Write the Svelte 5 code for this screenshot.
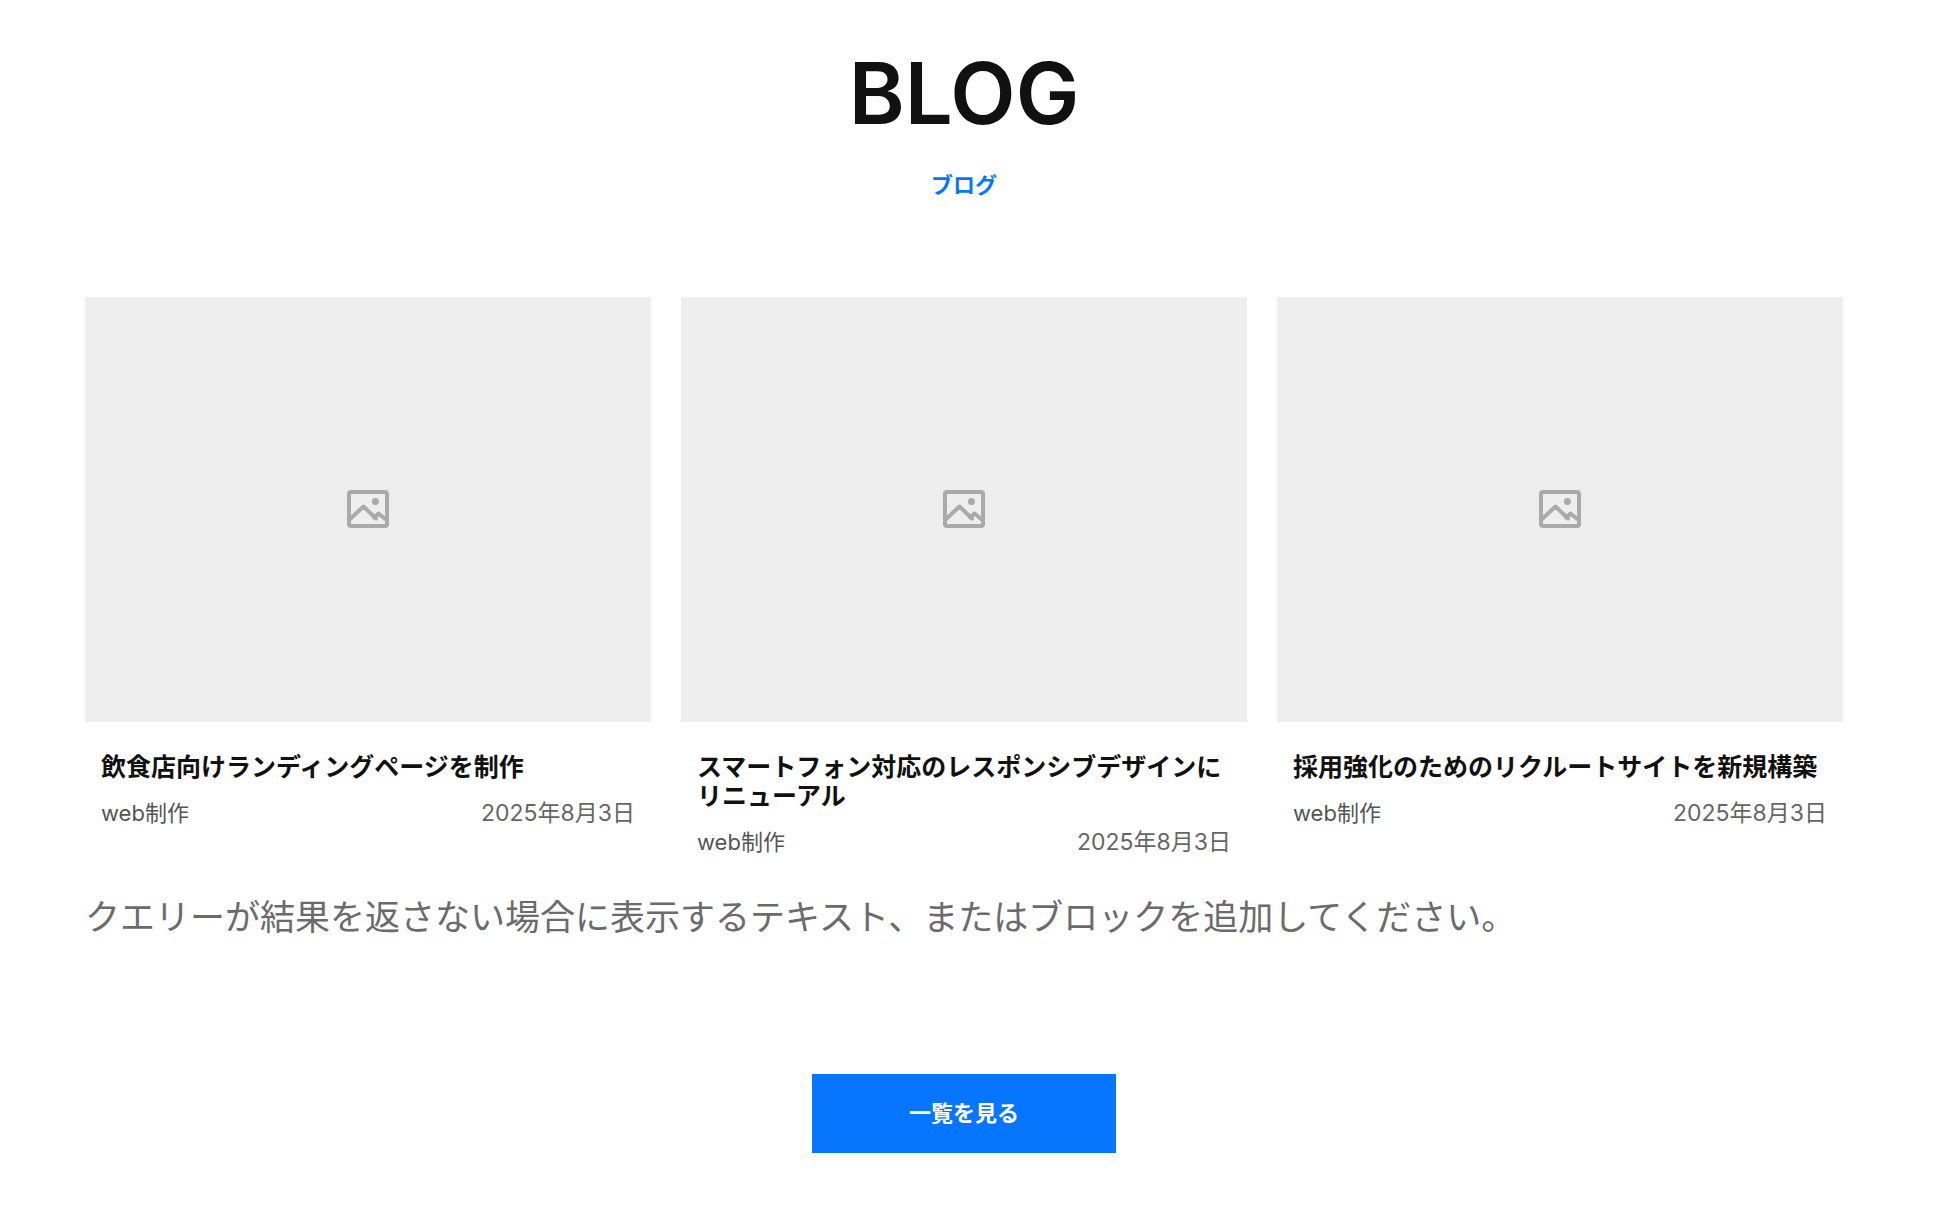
<script>
  const posts = [
    { title: '飲食店向けランディングページを制作', category: 'web制作', date: '2025年8月3日', iso: '2025-08-03' },
    { title: 'スマートフォン対応のレスポンシブデザインにリニューアル', category: 'web制作', date: '2025年8月3日', iso: '2025-08-03' },
    { title: '採用強化のためのリクルートサイトを新規構築', category: 'web制作', date: '2025年8月3日', iso: '2025-08-03' }
  ];
</script>

<section class="blog">
  <header>
    <h1>BLOG</h1>
    <p class="subtitle">ブログ</p>
  </header>

  <div class="posts">
    {#each posts as post}
      <article>
        <div class="thumb">
          <svg width="42" height="38" viewBox="0 0 42 38" fill="none" stroke="#aaa" stroke-width="4" stroke-linecap="round" stroke-linejoin="round" aria-hidden="true">
            <rect x="2" y="2" width="38" height="34" rx="2" />
            <path d="M2 30 16.500 16.500 29 28.500M27 27.500 31.500 23.500 40 30.500" />
            <circle cx="28.400" cy="11.400" r="3.500" fill="#aaa" stroke="none" />
          </svg>
        </div>
        <div class="body">
          <h2>{post.title}</h2>
          <div class="meta">
            <span class="category">{post.category}</span>
            <time datetime={post.iso}>{post.date}</time>
          </div>
        </div>
      </article>
    {/each}
  </div>

  <p class="empty">クエリーが結果を返さない場合に表示するテキスト、またはブロックを追加してください。</p>

  <a class="more" href="#list">一覧を見る</a>
</section>

<style>
  :global(body) {
    margin: 0;
    background: #fff;
    font-family: Inter, 'Noto Sans CJK JP', sans-serif;
    color: #111;
  }
  h1, h2, p { margin: 0; }
  .blog {
    box-sizing: border-box;
    padding: 44px 97px 59px 85px;
    display: flex;
    flex-direction: column;
  }
  header { text-align: center; }
  h1 { font-size: 85px; line-height: 100px; font-weight: 600; }
  .subtitle {
    margin-top: 25px;
    font-size: 22px;
    line-height: 32px;
    font-weight: 700;
    color: #0675ff;
  }
  .posts {
    margin-top: 96px;
    display: grid;
    grid-template-columns: repeat(3, minmax(0, 1fr));
    gap: 30px;
  }
  .thumb {
    aspect-ratio: 4 / 3;
    background: #eee;
    display: flex;
    align-items: center;
    justify-content: center;
  }
  .body { padding: 31px 16px 0; }
  h2 { font-size: 25px; line-height: 29px; font-weight: 700; }
  .meta {
    margin-top: 15px;
    display: flex;
    justify-content: space-between;
    font-size: 22px;
    line-height: 32px;
    color: #666;
  }
  .category { color: #555; }
  time { font-size: 23px; }
  .empty {
    margin-top: 33px;
    font-size: 35px;
    line-height: 52px;
    color: #6b6b6b;
  }
  .more {
    align-self: center;
    margin-top: 131px;
    box-sizing: border-box;
    min-width: 304px;
    padding: 23px 32px 24px;
    background: #0675ff;
    color: #fff;
    font-size: 22px;
    line-height: 32px;
    font-weight: 700;
    text-align: center;
    text-decoration: none;
  }
</style>
